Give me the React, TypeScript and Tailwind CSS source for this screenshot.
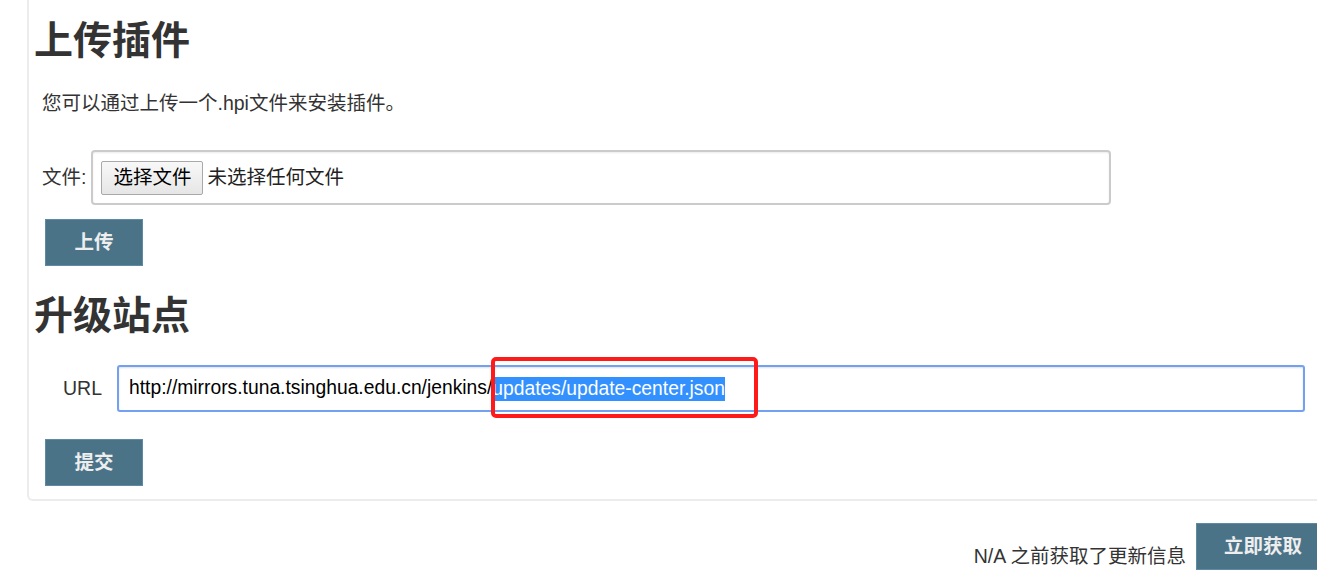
import React from "react";

export default function App() {
  const font = { fontFamily: '"Liberation Sans", "Noto Sans CJK SC", sans-serif' };
  return (
    <div className="w-[1317px] h-[583px] overflow-hidden bg-white relative text-[#333]" style={font}>
      <div className="ml-[27px] w-[1400px] border-l-2 border-b-2 border-[#ececec] rounded-bl-[6px] pl-[5px] pt-[17px] pb-[13px]">
        <h1 className="text-[39px] leading-[47px] font-bold text-[#333]">上传插件</h1>
        <div className="pl-[8px]">
          <p className="mt-[26px] text-[19.5px] leading-[27px]">您可以通过上传一个.hpi文件来安装插件。</p>
          <div className="mt-[33px] flex items-center">
            <span className="text-[19.5px] leading-[27px] mr-[5px]">文件:</span>
            <div className="w-[1020px] h-[55px] border-2 border-[#cbcbcb] rounded-[4px] shadow-[inset_0_1px_2px_rgba(0,0,0,0.08)] flex items-center px-[8px]">
              <div className="h-[34px] px-[11px] flex items-center border border-[#a9a9a9] rounded-[2px] bg-gradient-to-b from-[#f8f8f8] to-[#e6e6e6] text-[19.5px] text-black">
                选择文件
              </div>
              <span className="ml-[4px] text-[19.5px] text-[#222]">未选择任何文件</span>
            </div>
          </div>
          <button className="mt-[14px] ml-[3px] w-[98px] h-[47px] bg-[#4b7388] border border-[#5d8ba4] text-[#eee] font-bold text-[19.5px] flex items-center justify-center">
            上传
          </button>
        </div>
        <h1 className="mt-[26px] text-[39px] leading-[47px] font-bold text-[#333]">升级站点</h1>
        <div className="pl-[8px]">
          <div className="mt-[26px] flex items-center relative">
            <span className="pl-[21px] pr-[15px] text-[19.5px] leading-[27px] text-[#333]">URL</span>
            <div className="w-[1188px] h-[47px] border-2 border-[#72a1f2] rounded-[3px] shadow-[inset_0_1px_2px_rgba(0,0,0,0.12)] flex items-center px-[10px] text-[19.3px] text-black whitespace-nowrap">
              <span>http://mirrors.tuna.tsinghua.edu.cn/jenkins/</span>
              <span className="bg-[#3390ff] text-white leading-[24px]">updates/update-center.json</span>
            </div>
            <div className="absolute left-[449px] top-[-8px] w-[267px] h-[61px] border-[4px] border-[#ff1a1a] rounded-[5px] pointer-events-none" />
          </div>
          <button className="mt-[27px] ml-[3px] w-[98px] h-[47px] bg-[#4b7388] border border-[#5d8ba4] text-[#eee] font-bold text-[19.5px] flex items-center justify-center">
            提交
          </button>
        </div>
      </div>
      <div className="w-[1330px] mt-[22px] flex items-end justify-end">
        <span className="text-[19.5px] leading-[27px] text-[#333] mr-[10px]">N/A 之前获取了更新信息</span>
        <button className="w-[134px] h-[47px] bg-[#4b7388] border border-[#5d8ba4] text-[#eee] font-bold text-[19.5px] flex items-center justify-center">
          立即获取
        </button>
      </div>
    </div>
  );
}
